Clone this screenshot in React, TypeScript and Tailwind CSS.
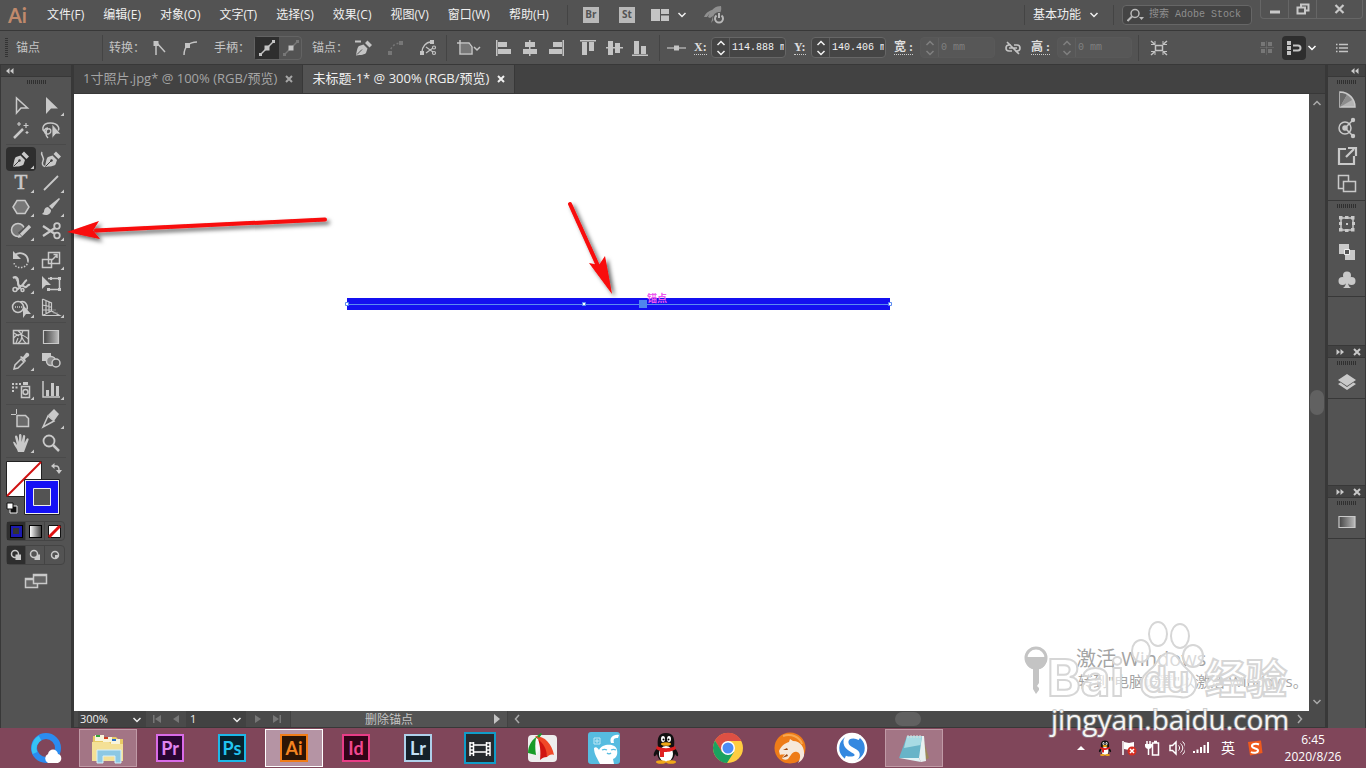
import type { ReactNode } from "react";
import clsx from "clsx";

const menus = ["文件(F)", "编辑(E)", "对象(O)", "文字(T)", "选择(S)", "效果(C)", "视图(V)", "窗口(W)", "帮助(H)"];

function Icon({ w = 24, h = 24, children }: { w?: number; h?: number; children: ReactNode }) {
  return (
    <svg width={w} height={h} viewBox={`0 0 ${w} ${h}`} fill="none" stroke="currentColor" strokeWidth="1.5" className="shrink-0" aria-hidden>
      {children}
    </svg>
  );
}

function Chevron({ up = false }: { up?: boolean }) {
  return (
    <Icon w={10} h={6}>
      <path d={up ? "M1.5 5 5 1.5 8.5 5" : "M1.5 1 5 4.5 8.5 1"} />
    </Icon>
  );
}

function Grip() {
  return (
    <div className="flex h-[5px] justify-center gap-px">
      {Array.from({ length: 10 }, (_, i) => (
        <span key={i} className="h-1 w-px bg-[#2f2f2f]" />
      ))}
    </div>
  );
}

function IconButton({ label, className, children }: { label: string; className?: string; children: ReactNode }) {
  return (
    <button type="button" aria-label={label} className={clsx("flex shrink-0 items-center justify-center", className)}>
      {children}
    </button>
  );
}

function Divider({ className }: { className?: string }) {
  return <span className={clsx("w-px shrink-0 bg-[#444]", className)} />;
}

/* ---------- menu bar ---------- */

function MenuBar() {
  return (
    <header className="flex h-[31px] shrink-0 items-center border-b border-[#383838] bg-[#535353] text-xs text-[#f0f0f0]">
      <span className="w-[39px] pl-2 font-['Lato',sans-serif] text-xl leading-6 font-bold text-[#c08a6c]">Ai</span>
      <nav className="flex gap-[3px]">
        {menus.map((m) => (
          <button key={m} type="button" className="px-2 whitespace-nowrap">
            {m}
          </button>
        ))}
      </nav>
      <Divider className="ml-2.5 h-5" />
      <div className="ml-[15px] flex items-center gap-5">
        <a href="#bridge" className="flex size-4 items-center justify-center bg-[#b9b9b9] text-[10px] font-bold text-[#535353]">Br</a>
        <a href="#stock" className="flex size-4 items-center justify-center bg-[#b9b9b9] text-[10px] font-bold text-[#535353]">St</a>
      </div>
      <IconButton label="排列文档" className="ml-4 gap-2">
        <Icon w={18} h={12}>
          <path d="M0 0h9v12H0zM10 0h8v5h-8zM10 6.500h8V12h-8z" fill="#c4c4c4" stroke="none" />
        </Icon>
        <Chevron />
      </IconButton>
      <IconButton label="GPU 性能" className="ml-4">
        <Icon w={22} h={20}>
          <path d="M1 12C3 7 8 5 9 5l-5 7zM5 12C8 4 13 1 18 1c1 5-1 8-4 10l-6 7 2-7-3 2z" fill="#8f8f8f" stroke="none" />
          <circle cx="16" cy="13" r="6" fill="#535353" stroke="none" />
          <path d="M13.500 10.500a4 4 0 1 0 5 0M16 8v5" stroke="#b8b8b8" strokeWidth="2" />
        </Icon>
      </IconButton>
      <div className="ml-auto flex h-full items-center">
        <Divider className="h-5" />
        <button type="button" className="ml-2 flex items-center gap-2 whitespace-nowrap">
          基本功能
          <Chevron />
        </button>
        <Divider className="ml-3.5 h-5" />
        <label className="ml-2 flex h-5 w-[130px] items-center gap-1 rounded-sm border border-[#666] bg-[#444] px-1 text-[#bbb]">
          <span className="sr-only">搜索 Adobe Stock</span>
          <Icon w={18} h={14}>
            <circle cx="8" cy="5.500" r="4" />
            <path d="M5 8.500.500 13" strokeWidth="2" />
            <path d="M12 9h5l-2.500 3z" fill="currentColor" stroke="none" />
          </Icon>
          <input
            placeholder="搜索 Adobe Stock"
            className="w-full min-w-0 bg-transparent font-['Liberation_Mono','Noto_Sans_CJK_SC',monospace] text-[10px] outline-none placeholder:text-[#8f8f8f]"
          />
        </label>
        <div className="mr-[3px] ml-2 flex h-[19px] self-start rounded-b-sm border border-t-0 border-[#666] text-[#c8c8c8]">
          <IconButton label="最小化" className="w-7 border-r border-[#666]">
            <Icon w={12} h={12}>
              <path d="M1 9h10" strokeWidth="3" />
            </Icon>
          </IconButton>
          <IconButton label="还原" className="w-7 border-r border-[#666]">
            <Icon w={14} h={12}>
              <path d="M5 4V1.500h7.500v6H9M1.500 4.500H9v6H1.500z" strokeWidth="2" />
            </Icon>
          </IconButton>
          <IconButton label="关闭" className="w-[45px]">
            <Icon w={12} h={12}>
              <path d="m1.500 2 8 8m0-8-8 8" strokeWidth="2.200" />
            </Icon>
          </IconButton>
        </div>
      </div>
    </header>
  );
}

/* ---------- control bar ---------- */

function Field({ id, label, value, wide, disabled }: { id: string; label: string; value: string; wide?: boolean; disabled?: boolean }) {
  return (
    <div className="flex shrink-0 items-center">
      <label
        htmlFor={id}
        className={clsx(
          "shrink-0 font-['Liberation_Serif','Noto_Sans_CJK_SC',serif] text-xs leading-[14px] font-bold text-[#dedede]",
          wide ? "w-[26px]" : "w-[17px]",
        )}
      >
        <span className="inline-block border-b border-dotted border-[#ccc] leading-[14px]">{label}</span>
      </label>
      <div
        className={clsx(
          "flex h-[21px] w-[75px] items-center rounded-sm border",
          disabled ? "border-[#595959] bg-[#575757] text-[#808080]" : "border-[#666] bg-[#454545] text-[#f2f2f2]",
        )}
      >
        <span className="flex h-full w-[18px] shrink-0 flex-col items-center justify-center gap-1 border-r border-[#5f5f5f]">
          <Chevron up />
          <Chevron />
        </span>
        <input
          id={id}
          defaultValue={value}
          disabled={disabled}
          className="w-full min-w-0 pr-px pl-0.5 font-['Liberation_Mono',monospace] text-[10px] outline-none"
        />
      </div>
    </div>
  );
}

const aligns = [
  [
    ["左对齐", "M0 0h1.500v16H0zM2 2h9v5H2zM2 9h13v5H2z"],
    ["水平居中", "M7 0h1.500v16H7zM3 2h10v5H3zM1 9h14v5H1z"],
    ["右对齐", "M14.500 0H16v16h-1.500zM5 2h9v5H5zM1 9h13v5H1z"],
  ],
  [
    ["顶对齐", "M0 0h16v1.500H0zM2 2h5v13H2zM9 2h5v9H9z"],
    ["垂直居中", "M0 7h17v1.500H0zM2 1h5v14H2zM9 3h5v10H9z"],
    ["底对齐", "M0 14.500h16V16H0zM2 1h5v13H2zM9 6h5v8H9z"],
  ],
];

function ControlBar() {
  return (
    <section aria-label="控制" className="flex h-[34px] shrink-0 items-center border-b border-[#383838] bg-[#535353] text-xs text-[#c4c4c4]">
      <div className="flex w-[102px] shrink-0 items-center pl-[5px]">
        <svg width="3" height="20" aria-hidden>
          <path d="M1.500 0v20" stroke="#333" strokeWidth="3" strokeDasharray="1 1" />
        </svg>
        <span className="ml-2">锚点</span>
      </div>
      <Divider className="h-[26px]" />
      <span className="ml-1.5 w-9 shrink-0">转换：</span>
      <IconButton label="转换为尖角" className="w-[30px]">
        <Icon w={16} h={16}>
          <path d="M4 2v13M4 2l9 10" />
          <path d="M1.500 1h5v5h-5z" fill="currentColor" stroke="none" />
        </Icon>
      </IconButton>
      <IconButton label="转换为平滑" className="w-[30px]">
        <Icon w={16} h={16}>
          <path d="M2 15C2 7 7 2 15 2" />
          <path d="M3 3h5v5H3z" fill="currentColor" stroke="none" />
        </Icon>
      </IconButton>
      <span className="ml-[9px] w-10 shrink-0">手柄：</span>
      <div className="flex h-6 w-12 shrink-0 rounded-sm border border-[#636363]">
        <IconButton label="显示手柄" className="w-6 bg-[#2e2e2e]">
          <Icon w={16} h={16}>
            <path d="m2 14 12-12" />
            <path d="M5.500 5.500h5v5h-5zM0 13h3v3H0zM13 0h3v3h-3z" fill="currentColor" stroke="none" />
          </Icon>
        </IconButton>
        <IconButton label="隐藏手柄" className="w-6">
          <Icon w={16} h={16}>
            <path d="m2 14 12-12" stroke="#777" />
            <path d="M0 13h3v3H0zM13 0h3v3h-3z" fill="#777" stroke="none" />
            <path d="M5.500 5.500h5v5h-5z" fill="currentColor" stroke="none" />
          </Icon>
        </IconButton>
      </div>
      <span className="ml-2.5 w-9 shrink-0">锚点：</span>
      <IconButton label="删除所选锚点" className="w-8">
        <Icon w={18} h={16}>
          <path d="M0 1.500h6" strokeWidth="2" />
          <path d="M1 15.500C2 10 2.500 7 4 6l4.500-1.500 4 4L11 13c-1 1.500-5 2-10 2.500zM10 3l2.500-2.500L17 5l-2.500 2.500z" fill="currentColor" stroke="none" />
          <path d="m2 14.500 5-5" stroke="#535353" strokeWidth="1" />
        </Icon>
      </IconButton>
      <IconButton label="连接锚点" className="w-8 text-[#777]">
        <Icon w={16} h={14}>
          <path d="M2 12C2 7 6 2 13 2" strokeDasharray="2 2" />
          <path d="M0 10h4v4H0zM11 0h4v4h-4z" fill="currentColor" stroke="none" />
        </Icon>
      </IconButton>
      <IconButton label="剪切路径" className="w-8">
        <Icon w={17} h={16}>
          <path d="M2 12C2 7 6 2 11 2" />
          <path d="M0 11h4v4H0zM10 0h4v4h-4z" fill="currentColor" stroke="none" />
          <path d="m6 7 7 5M6 13l7-5" strokeWidth="1.200" />
          <circle cx="14" cy="7.500" r="1.500" strokeWidth="1.200" />
          <circle cx="14" cy="13" r="1.500" strokeWidth="1.200" />
        </Icon>
      </IconButton>
      <Divider className="ml-0.5 h-[26px]" />
      <IconButton label="对齐画板" className="ml-2.5 w-6">
        <Icon w={24} h={16}>
          <path d="M3 0v14h12V7l-3-4H0" />
          <path d="M4 4h8l2 3v6H4z" fill="#777" stroke="none" />
          <path d="m17 7 3 3 3-3" />
        </Icon>
      </IconButton>
      {aligns.map((set, i) => (
        <div key={i} className={clsx("flex shrink-0", i === 0 ? "ml-2.5" : "ml-1.5")}>
          {set.map(([name, d]) => (
            <IconButton key={name} label={name} className="w-[26px]">
              <Icon w={17} h={16}>
                <path d={d} fill="currentColor" stroke="none" />
              </Icon>
            </IconButton>
          ))}
        </div>
      ))}
      <Divider className="ml-1.5 h-[26px]" />
      <IconButton label="参考点" className="mr-0.5 w-8">
        <Icon w={19} h={8}>
          <path d="M0 4h19" strokeWidth="1.200" />
          <path d="M7 1.500h5v5H7z" fill="currentColor" stroke="none" />
        </Icon>
      </IconButton>
      <div className="flex shrink-0 gap-2">
        <Field id="x" label="X:" value="114.888 mm" />
        <Field id="y" label="Y:" value="140.406 mm" />
        <Field id="w" label="宽 :" value="0 mm" wide disabled />
      </div>
      <IconButton label="约束宽高比" className="w-9">
        <Icon w={16} h={14}>
          <path d="M6 4H4a3 3 0 0 0 0 6h3M10 10h2a3 3 0 0 0 0-6H9M4 7h8M2 1l12 12" strokeWidth="1.600" />
        </Icon>
      </IconButton>
      <Field id="h" label="高 :" value="0 mm" wide disabled />
      <Divider className="ml-1.5 h-[26px]" />
      <IconButton label="隔离选中的对象" className="w-10">
        <Icon w={18} h={16}>
          <path d="M5.500 5.500h7v5h-7zM1 1l4 3.500M17 1l-4 3.500M1 15l4-3.500M17 15l-4-3.500" />
          <path d="M5 1v3.500H1M13 1v3.500h4M5 15v-3.500H1M13 15v-3.500h4" strokeWidth="1" />
        </Icon>
      </IconButton>
      <div className="ml-auto flex items-center">
        <IconButton label="对齐像素" className="w-[30px] text-[#777]">
          <Icon w={14} h={14}>
            <path d="M1 1h4v4H1zM8 1h4v4H8zM1 8h4v4H1zM8 8h4v4H8z" fill="currentColor" stroke="none" />
            <path d="M6.500 0v14M0 6.500h14" strokeWidth=".5" />
          </Icon>
        </IconButton>
        <IconButton label="对齐到网格" className="size-6 rounded-sm bg-[#2e2e2e]">
          <Icon w={15} h={14}>
            <path d="M0 0h4v4H0zM0 5h4v4H0zM0 10h4v4H0z" fill="currentColor" stroke="none" />
            <path d="M6 4.500h5a2.500 2.500 0 0 1 0 5H6" strokeWidth="2" />
          </Icon>
        </IconButton>
        <IconButton label="对齐选项" className="w-3 text-white">
          <Chevron />
        </IconButton>
        <IconButton label="控制菜单" className="w-12">
          <Icon w={12} h={10}>
            <path d="M3 1.500h9M3 5h9M3 8.500h9M0 1.500h1.500M0 5h1.500M0 8.500h1.500" />
          </Icon>
        </IconButton>
      </div>
    </section>
  );
}

/* ---------- tool panel, every icon sits in a 30x24 cell ---------- */

type Tool = { name: string; more?: boolean; active?: boolean; art: ReactNode };

const solid = { fill: "currentColor", stroke: "none" };
const nib = (
  <>
    <path d="M7 20c1-5 1.500-9 3-10l4.500-1.500L19 13l-1.500 4.500C16.500 19 12 19.500 7 20zM15.500 7l2.500-2.500 5 5-2.500 2.500z" {...solid} />
    <path d="m7.500 19.500 5.500-5.500" stroke="#3c3c3c" strokeWidth="1" />
    <circle cx="13.500" cy="13.500" r="1.200" fill="#3c3c3c" stroke="none" />
  </>
);

const toolGroups: Tool[][] = [
  [
    { name: "选择工具", art: <path d="M10.500 4v15l4.500-5h6.500z" /> },
    { name: "直接选择工具", more: true, art: <path d="M10 3v17l5-5.500h7z" {...solid} /> },
    {
      name: "魔棒工具",
      art: (
        <>
          <path d="m8 20 9-9" strokeWidth="2.500" />
          <path d="M13 4v4M11 6h4M20 5v5M17.500 7.500h5M21 13v3M19.500 14.500h3" strokeWidth="1.200" />
        </>
      ),
    },
    {
      name: "套索工具",
      art: (
        <>
          <path d="M11 14.500C5 14 5 5 14.500 5c8 0 10 6 6.500 8.500M10 14c0-4 5-4 5-1s-4 4-6 2 0-5 3-5M10 16c0 2 1 3 2 4" />
          <path d="M16 6v14.500l4-4.500h5z" fill="currentColor" stroke="#535353" strokeWidth=".8" />
        </>
      ),
    },
  ],
  [
    { name: "钢笔工具", more: true, active: true, art: nib },
    {
      name: "曲率工具",
      art: (
        <>
          <g transform="translate(2 0)">{nib}</g>
          <path d="M6 5c-2 3 3 5 1 9-1 2-1 5 2 5.500" />
        </>
      ),
    },
    {
      name: "文字工具",
      more: true,
      art: (
        <text x="15" y="18" textAnchor="middle" fontSize="21" fontFamily="Liberation Serif" stroke="currentColor" strokeWidth=".6" fill="currentColor">
          T
        </text>
      ),
    },
    { name: "直线段工具", more: true, art: <path d="M8 19 22 5" strokeWidth="1.800" /> },
    { name: "多边形工具", more: true, art: <path d="m11 5.500h8l4 6.500-4 6.500h-8L7 12z" fill="#777" /> },
    {
      name: "画笔工具",
      more: true,
      art: (
        <>
          <path d="m23 3-10 8 3 3 8-10z" {...solid} />
          <path d="M12 12c-3 0-4 3-4 5l-2 2c4 2 9 1 9-4z" {...solid} />
        </>
      ),
    },
    {
      name: "Shaper 工具",
      more: true,
      art: (
        <>
          <circle cx="12" cy="11" r="6.500" fill="#777" />
          <path d="m14 16 10-9" stroke="#535353" strokeWidth="6" />
          <path d="m15 16 9-9" strokeWidth="3.200" />
          <path d="m12 19 1-4 3 3z" {...solid} />
        </>
      ),
    },
    {
      name: "剪刀工具",
      more: true,
      art: (
        <>
          <path d="m7 7 12 8M7 17l12-8" strokeWidth="2.200" />
          <circle cx="21" cy="7" r="2.800" strokeWidth="1.800" />
          <circle cx="21" cy="16.500" r="2.800" strokeWidth="1.800" />
        </>
      ),
    },
  ],
  [
    {
      name: "旋转工具",
      more: true,
      art: (
        <>
          <path d="M9 7c5-4 13-1 13 6" strokeWidth="1.800" />
          <path d="M22 13c0 8-14 9-14 1" strokeDasharray="1.500 1.500" />
          <path d="M7 3v8h8z" {...solid} />
        </>
      ),
    },
    {
      name: "比例缩放工具",
      more: true,
      art: (
        <>
          <path d="M12.500 4.500h11v11h-11zM6.500 11.500h9v8h-9z" />
          <path d="m16 12 5-5M17.500 6.500H21V10" />
        </>
      ),
    },
    {
      name: "宽度工具",
      more: true,
      art: (
        <>
          <path d="M7 6c3-2 5 0 5 3s0 6 3 5 3-5 6-6M7 18c5 1 6-2 8-4s3 2 5 1 2-3 4-2" strokeWidth="2.200" />
          <path d="m9 5 7 14" strokeWidth="1" />
          <circle cx="9" cy="17.500" r="2" fill="#535353" />
          <circle cx="16.500" cy="18" r="1.500" fill="#535353" />
        </>
      ),
    },
    {
      name: "自由变换工具",
      art: (
        <>
          <path d="M12 6.500h11.500v11H12" />
          <path d="M6 4v13l4-4h5zM22 5h3v3h-3zM22 16h3v3h-3zM11 16h3v3h-3zM14 5h2v3h-2z" {...solid} />
        </>
      ),
    },
    {
      name: "形状生成器工具",
      more: true,
      art: (
        <>
          <circle cx="12" cy="11" r="5.500" />
          <path d="M14 6c6-2 10 6 5 9" />
          <path d="M9 11h10" strokeDasharray="1 1" />
          <path d="M17 9v13l3-4h5z" {...solid} />
        </>
      ),
    },
    {
      name: "透视网格工具",
      more: true,
      art: (
        <>
          <path d="M6.500 3v16.500M6.500 3l9 4v8M10 5v14M13 6v10M6.500 9l9 2M6.500 14h9M6.500 19.500h17l-8-4.500-9 4.500" strokeWidth="1.200" />
          <path d="M16 14h4M17 17h5" stroke="#888" strokeWidth="1" />
        </>
      ),
    },
  ],
  [
    {
      name: "网格工具",
      art: (
        <>
          <path d="M7.500 5.500h15v13h-15z" />
          <path d="M7.500 13c5-6 10-3 15 1M12 5.500c5 4 5 9 0 13M17 5.500c-3 5-1 9 3 13M8 8l5 3M10 18l2-5" strokeWidth="1.200" />
        </>
      ),
    },
    { name: "渐变工具", art: <path d="M7.500 5.500h15v13h-15z" fill="url(#fade)" strokeWidth="1.200" /> },
    {
      name: "吸管工具",
      more: true,
      art: (
        <>
          <path d="m8 20 1-4 6-6 3 3-6 6z" />
          <path d="m14 8 1-1 2 1 3-4c2-1 4 1 3 3l-4 3 1 2-1 1z" {...solid} />
        </>
      ),
    },
    {
      name: "混合工具",
      art: (
        <>
          <path d="M6 4h9v8H6z" {...solid} />
          <circle cx="15" cy="12" r="4.500" fill="#888" />
          <circle cx="20" cy="14" r="4" fill="#535353" />
        </>
      ),
    },
  ],
  [
    {
      name: "符号喷枪工具",
      more: true,
      art: (
        <>
          <path d="M6 5h2v2H6zM9.500 5h2v2h-2zM13 5h2v2h-2zM6 8.500h2v2H6zM9.500 8.500h2v2h-2zM6 12h2v2H6zM17 4h5v3h-5z" {...solid} />
          <path d="M15.500 8.500h8v11h-8z" />
          <circle cx="19.500" cy="14" r="2.500" />
        </>
      ),
    },
    {
      name: "柱形图工具",
      more: true,
      art: (
        <>
          <path d="M7 3v16h17" />
          <path d="M10 12h3v6h-3zM15 5h3v13h-3zM20 8h3v10h-3z" {...solid} />
        </>
      ),
    },
  ],
  [
    {
      name: "画板工具",
      art: (
        <>
          <path d="M10.500 2v5M5 7.500h5" strokeWidth="1" />
          <path d="M11 8.500h8.500l3 3v8H11z" fill="#6a6a6a" />
        </>
      ),
    },
    {
      name: "切片工具",
      more: true,
      art: (
        <>
          <path d="m7 20 5-11 6 5z" />
          <path d="m12 8 6-6 5 5-5 7z" {...solid} />
        </>
      ),
    },
    {
      name: "抓手工具",
      more: true,
      art: (
        <path
          d="M7 11c1-1 2 0 4 3L9 6c0-2 2-2 2.500 0l1.500 5V4.500c0-2 2.500-2 2.500 0V11l1.500-6c.5-2 2.500-1 2.200.5L18.500 12l2-4c1-1.500 2.700-.5 2 1l-3 8-1.500 4h-6c-1-4-4-6-5-10z"
          {...solid}
        />
      ),
    },
    {
      name: "缩放工具",
      art: (
        <>
          <circle cx="13" cy="10" r="5.500" strokeWidth="1.800" />
          <path d="m17 14 6 6" strokeWidth="2.500" />
        </>
      ),
    },
  ],
];

function ToolPanel() {
  return (
    <aside aria-label="工具" className="flex w-[74px] shrink-0 flex-col border-x border-r-3 border-[#383838] bg-[#535353] text-[#c9c9c9]">
      <svg width="0" height="0" className="absolute" aria-hidden>
        <linearGradient id="fade">
          <stop stopColor="#444" />
          <stop offset="1" stopColor="#bbb" />
        </linearGradient>
      </svg>
      <div className="flex h-3 shrink-0 items-center border-b border-[#383838] bg-[#424242] pl-[5px]">
        <Icon w={8} h={6}>
          <path d="M3.500 0 0 3l3.500 3zM7.500 0 4 3l3.500 3z" {...solid} />
        </Icon>
      </div>
      <div className="h-[17px] pt-[3px]">
        <Grip />
      </div>
      <div className="pl-[5px]">
        {toolGroups.map((group, i) => (
          <div key={i} className={clsx("grid w-[60px] grid-cols-2", i > 0 && "mt-0.5 border-t border-[#4a4a4a] pt-0.5")}>
            {group.map((t) => (
              <button
                key={t.name}
                type="button"
                aria-label={t.name}
                aria-pressed={t.active ?? false}
                className={clsx("h-6 w-[30px] rounded", t.active && "bg-[#2e2e2e]")}
              >
                <Icon w={30}>
                  {t.art}
                  {t.more && <path d="M28 18.500V22h-3.500z" {...solid} />}
                </Icon>
              </button>
            ))}
          </div>
        ))}
        <div className="mt-0.5 w-[60px] border-t border-[#4a4a4a] pt-[3px]">
          <svg width="60" height="56" viewBox="0 0 60 56" fill="none" role="img" aria-label="填色和描边">
            <path d="M.5.5h35v35H.5z" fill="#fff" stroke="#222" />
            <path d="m1 35 34-34" stroke="#d01010" strokeWidth="2" />
            <path d="M18.500 18.500h35v35h-35z" fill="#eee" stroke="#222" />
            <path d="M20 20h32v32H20z" fill="#1410f5" />
            <path d="M27.500 27.500h17v17h-17z" fill="#535353" stroke="#eee" />
            <path d="M48 5h2c2 0 3 1 3 4" stroke="#c9c9c9" strokeWidth="1.500" />
            <path d="M48.500 2v6L45 5zM50 9h6l-3 4z" fill="#c9c9c9" />
            <path d="M4 45h7v7H4z" fill="#111" stroke="#eee" />
            <path d="M1 42h6v6H1z" fill="#fff" stroke="#111" />
          </svg>
        </div>
        <div className="mt-1 flex h-5 w-[59px] rounded-sm border border-[#444]">
          <IconButton label="颜色" className="w-[18px] bg-[#2e2e2e]">
            <span className="flex size-[13px] items-center justify-center border border-black bg-[#1c1ab0]">
              <span className="size-1.5 bg-[#333]" />
            </span>
          </IconButton>
          <IconButton label="渐变" className="w-5 border-x border-[#444]">
            <span className="size-[13px] border border-black bg-linear-to-r from-white to-[#444]" />
          </IconButton>
          <IconButton label="无" className="w-[19px]">
            <Icon w={13} h={13}>
              <path d="M.5.5h12v12H.5z" fill="#fff" stroke="#111" strokeWidth="1" />
              <path d="m1 12 11-11" stroke="#e01010" strokeWidth="3" />
            </Icon>
          </IconButton>
        </div>
        <div className="mt-1 flex h-5 w-[59px] rounded-sm border border-[#444]">
          <IconButton label="正常绘图" className="w-[18px] bg-[#2e2e2e]">
            <Icon w={12} h={12}>
              <circle cx="5" cy="5" r="3.500" />
              <path d="M5.500 5.500h5.500V11H5.500z" {...solid} />
            </Icon>
          </IconButton>
          <IconButton label="背面绘图" className="w-5 border-x border-[#444]">
            <Icon w={12} h={12}>
              <path d="M5.500 5.500h5.500V11H5.500z" {...solid} />
              <circle cx="5" cy="5" r="3.500" fill="#535353" />
            </Icon>
          </IconButton>
          <IconButton label="内部绘图" className="w-[19px]">
            <Icon w={12} h={12}>
              <circle cx="6" cy="6" r="3.500" />
              <path d="M6 6h3v3H6z" {...solid} />
            </Icon>
          </IconButton>
        </div>
        <IconButton label="更改屏幕模式" className="mt-1.5 h-5 w-[60px]">
          <Icon w={24} h={18}>
            <path d="M1.500 6.500h12v9h-12z" fill="#666" />
            <path d="M9.500 2.500h13v9h-13z" fill="#666" />
            <path d="M2 7.500h7M10 3.500h12" />
          </Icon>
        </IconButton>
      </div>
    </aside>
  );
}

/* ---------- document area ---------- */

const tabs = [
  { title: "1寸照片.jpg* @ 100% (RGB/预览)", active: false },
  { title: "未标题-1* @ 300% (RGB/预览)", active: true },
];

function Tabs() {
  return (
    <div role="tablist" className="flex h-[29px] shrink-0 border-b border-[#383838] bg-[#424242] text-[13px]">
      {tabs.map((t) => (
        <div
          key={t.title}
          className={clsx(
            "flex items-center gap-2 border-r border-[#383838] px-[9px]",
            t.active ? "bg-[#535353] text-[#f0f0f0]" : "text-[#a5a5a5]",
          )}
        >
          <button type="button" role="tab" aria-selected={t.active} className="whitespace-nowrap">
            {t.title}
          </button>
          <IconButton label="关闭标签">
            <Icon w={8} h={8}>
              <path d="m1 1 6 6m0-6-6 6" strokeWidth="2" />
            </Icon>
          </IconButton>
        </div>
      ))}
    </div>
  );
}

function Artwork() {
  return (
    <svg width="840" height="240" className="absolute top-0 left-0 overflow-visible" role="img" aria-label="蓝色线段">
      <defs>
        <filter id="drop" x="-20%" y="-50%" width="140%" height="250%">
          <feDropShadow dx="3" dy="3" stdDeviation="2" floodOpacity="0.6" />
        </filter>
      </defs>
      <path d="M273 204h543v12H273z" fill="#1410f0" />
      <path d="M273 210.500h543" stroke="#5b8cf0" />
      <path d="M271.500 208.500h3v3h-3zM508.500 208.500h3v3h-3zM814.500 208.500h3v3h-3z" fill="#fff" stroke="#5b8cf0" />
      <path d="M565 206h8v8h-8z" fill="#4f86ee" />
      <text x="573" y="208" fontSize="10" fontWeight="bold" fill="#ee55ee">
        锚点
      </text>
      <g fill="#f80808" stroke="#f80808" filter="url(#drop)">
        <path d="m251 125.500-229 11" strokeWidth="4" strokeLinecap="round" />
        <path d="m-7 138 32-11-6 9.500 7 8.500z" stroke="none" />
        <path d="m496 110 28 62" strokeWidth="4" strokeLinecap="round" />
        <path d="m538 200-23-31 10 2 6-9z" stroke="none" />
      </g>
    </svg>
  );
}

function StatusBar() {
  return (
    <div className="flex h-[17px] shrink-0 items-center border-b border-[#383838] bg-[#4a4a4a] text-[11px] text-[#eee]">
      <div className="relative ml-1 h-full w-[68px] bg-[#424242]">
        <select aria-label="缩放" className="h-full w-full appearance-none pl-0.5 outline-none">
          <option>300%</option>
        </select>
        <span className="pointer-events-none absolute top-1.5 right-1">
          <Chevron />
        </span>
      </div>
      <span className="flex w-10 justify-center gap-2.5 text-[#777]">
        <Icon w={10} h={10}>
          <path d="M1 1h1.500v8H1zM9 1v8L3 5z" {...solid} />
        </Icon>
        <Icon w={8} h={10}>
          <path d="M7 1v8L1 5z" {...solid} />
        </Icon>
      </span>
      <div className="relative h-full w-[60px] bg-[#424242]">
        <select aria-label="画板" className="h-full w-full appearance-none pl-1 outline-none">
          <option>1</option>
        </select>
        <span className="pointer-events-none absolute top-1.5 right-1">
          <Chevron />
        </span>
      </div>
      <span className="flex w-11 justify-center gap-2.5 text-[#777]">
        <Icon w={8} h={10}>
          <path d="M1 1v8l6-4z" {...solid} />
        </Icon>
        <Icon w={10} h={10}>
          <path d="M7.500 1H9v8H7.500zM1 1v8l6-4z" {...solid} />
        </Icon>
      </span>
      <div className="flex h-full w-[218px] items-center border-x border-[#424242] bg-[#535353] text-xs text-[#c4c4c4]">
        <span className="flex-1 pt-0.5 text-center">删除锚点</span>
        <IconButton label="状态菜单" className="w-5">
          <Icon w={8} h={10}>
            <path d="M1 0v10l6-5z" {...solid} />
          </Icon>
        </IconButton>
      </div>
      <div className="flex h-full flex-1 items-center px-1.5 text-[#aaa]">
        <Icon w={6} h={10}>
          <path d="M5 1 1.500 5 5 9" />
        </Icon>
        <span className="ml-auto h-3.5 w-[26px] rounded-full bg-[#616161]" />
        <span className="ml-[376px]">
          <Icon w={6} h={10}>
            <path d="M1 1l3.500 4L1 9" />
          </Icon>
        </span>
      </div>
      <span className="w-4" />
    </div>
  );
}

function Workspace() {
  return (
    <main className="flex min-w-0 flex-1 flex-col">
      <Tabs />
      <div className="flex min-h-0 flex-1">
        <div className="relative z-10 flex-1 bg-white">
          <Artwork />
        </div>
        <div className="flex w-4 shrink-0 flex-col items-center justify-between bg-[#4a4a4a] py-1.5 text-[#aaa]">
          <Chevron up />
          <span className="h-[25px] w-3.5 rounded-full bg-[#616161]" />
          <Chevron />
        </div>
      </div>
      <StatusBar />
    </main>
  );
}

/* ---------- right dock ---------- */

const dockTop: Tool[][] = [
  [
    {
      name: "颜色",
      art: (
        <>
          <path d="M5 19V4c9 0 15 7 15 15z" fill="#b4b4b4" />
          <path d="M5 19V5c3 0 5 .5 7 2z" fill="#6a6a6a" stroke="none" />
          <path d="M5 19 12 7c2 1 4 3 5 5z" fill="#8c8c8c" stroke="none" />
        </>
      ),
    },
    {
      name: "颜色主题",
      art: (
        <>
          <circle cx="10" cy="12" r="6" />
          <circle cx="10" cy="12" r="2" fill="currentColor" />
          <path d="m11 11 7-7M11 13l7 7" />
          <circle cx="18" cy="4" r="2.200" {...solid} />
          <circle cx="18" cy="20" r="2.200" {...solid} />
        </>
      ),
    },
    { name: "资源导出", art: <path d="M11 5H4v15h15v-8M11 13l8-8M13 4h8v8" strokeWidth="2.200" /> },
    {
      name: "画板",
      art: (
        <>
          <path d="M3.500 3.500h10v13h-10z" />
          <path d="M8.500 9.500h12v10h-12z" fill="#535353" />
        </>
      ),
    },
  ],
  [
    {
      name: "变换",
      art: (
        <>
          <path d="M6 6h12v12H6z" />
          <path d="M4 4h3.500v3.500H4zM10 4h3.500v3H10zM16 4h3.500v3.500H16zM4 10h3v3H4zM17 10h3v3h-3zM4 16h3.500v3.500H4zM10 17h3.500v3H10zM16 16h3.500v3.500H16zM11 11h2v2h-2z" {...solid} />
        </>
      ),
    },
    {
      name: "路径查找器",
      art: (
        <>
          <path d="M4 4h10v10H4zM10 10h10v10H10z" {...solid} />
          <path d="M9.500 9.500h5v5h-5z" fill="#535353" stroke="#eee" strokeWidth="1" />
        </>
      ),
    },
    {
      name: "符号",
      art: (
        <>
          <circle cx="12" cy="7.500" r="4" {...solid} />
          <circle cx="7.500" cy="13" r="4" {...solid} />
          <circle cx="16.500" cy="13" r="4" {...solid} />
          <path d="M11 10h2c0 6 0 8 3 10H8c3-2 3-4 3-10z" {...solid} />
        </>
      ),
    },
  ],
];

const dockLower: Tool[] = [
  { name: "图层", art: <path d="m12 4 9 6-9 6-9-6zM3 14l2.500-1.500L12 17l6.500-4.500L21 14l-9 6z" {...solid} /> },
  { name: "渐变", art: <path d="M4 6.500h16v11H4z" fill="url(#fade)" strokeWidth="1.200" /> },
];

function Dock() {
  return (
    <aside aria-label="面板" className="flex w-[41px] shrink-0 flex-col border-r border-l-3 border-[#383838] bg-[#535353] text-[#c9c9c9]">
      <div className="flex h-3 shrink-0 items-center justify-end border-b border-[#383838] bg-[#424242] pr-1.5">
        <Icon w={8} h={6}>
          <path d="M3.500 0 0 3l3.500 3zM7.500 0 4 3l3.500 3z" {...solid} />
        </Icon>
      </div>
      {dockTop.map((group, i) => (
        <div key={i} className="border-b border-[#383838] pt-[3px] pb-0.5">
          <Grip />
          <div className="pt-px">
            {group.map((t) => (
              <IconButton key={t.name} label={t.name} className="h-7 w-full">
                <Icon>{t.art}</Icon>
              </IconButton>
            ))}
          </div>
        </div>
      ))}
      <div className="mt-12 flex flex-col gap-[86px]">
        {dockLower.map((t) => (
          <div key={t.name} className="border-y border-[#383838]">
            <div className="flex h-3 items-center justify-between border-b border-[#383838] bg-[#424242] pr-1 pl-2">
              <Icon w={8} h={6}>
                <path d="M.5 0 4 3 .5 6zM4.500 0 8 3 4.500 6z" {...solid} />
              </Icon>
              <Icon w={8} h={8}>
                <path d="m1 1 6 6m0-6-6 6" strokeWidth="2" />
              </Icon>
            </div>
            <div className="pt-[3px]">
              <Grip />
            </div>
            <IconButton label={t.name} className="h-8 w-full">
              <Icon>{t.art}</Icon>
            </IconButton>
          </div>
        ))}
      </div>
    </aside>
  );
}

/* ---------- taskbar ---------- */

function Penguin({ size }: { size: number }) {
  return (
    <svg width={size} height={size} viewBox="0 0 32 32" aria-hidden>
      <path d="M8 15C7 7 8 1 16 1s9 6 8 14c3 3 5 7 4 9-1 1-2-1-3-2-1 5-4 8-9 8s-8-3-9-8c-1 1-2 3-3 2-1-2 1-6 4-9z" fill="#111" />
      <ellipse cx="16" cy="22" rx="7" ry="8" fill="#fff" />
      <ellipse cx="11" cy="30" rx="5" ry="1.800" fill="#f0a818" />
      <ellipse cx="21" cy="30" rx="5" ry="1.800" fill="#f0a818" />
      <ellipse cx="13" cy="7" rx="2" ry="3" fill="#fff" />
      <ellipse cx="19" cy="7" rx="2" ry="3" fill="#fff" />
      <circle cx="13.500" cy="7.500" r="1" />
      <circle cx="18.500" cy="7.500" r="1" />
      <ellipse cx="16" cy="12" rx="5" ry="1.800" fill="#f0a818" />
      <path d="M7 14c6 3 12 3 18 0l1 3c-5 3-9 3-12 3v5h-4v-6l-4-2z" fill="#e02020" />
    </svg>
  );
}

function Adobe({ text, className }: { text: string; className: string }) {
  return (
    <span className={clsx("flex size-7 items-center justify-center border-2 font-['Lato',sans-serif] text-lg leading-6 font-bold", className)}>
      {text}
    </span>
  );
}

const apps: { name: string; state?: "open" | "front"; icon: ReactNode }[] = [
  {
    name: "QQ浏览器",
    icon: (
      <svg width="32" height="32" viewBox="0 0 32 32" aria-hidden>
        <circle cx="16" cy="16" r="12" fill="none" stroke="#2b8cf0" strokeWidth="6" />
        <path d="M5 21A12 12 0 0 1 10 6" fill="none" stroke="#35c3f5" strokeWidth="5" />
        <path d="M18 31a5 5 0 0 1 0-9c1-6 9-6 10 0 5 1 4 9-1 9z" fill="#fff" />
      </svg>
    ),
  },
  {
    name: "文件资源管理器",
    state: "open",
    icon: (
      <svg width="34" height="32" viewBox="0 0 34 32" aria-hidden>
        <path d="M2 4h8l2 3h4l2-2h7l2 2h5v22H1z" fill="#e8c964" />
        <path d="M4 3h9v6H4z" fill="#f8f4da" />
        <path d="M5 3h4v2H5z" fill="#34a53a" />
        <path d="M12 5h9v5h-9z" fill="#f8f4da" />
        <path d="M13 5h4v2h-4z" fill="#d04020" />
        <path d="M20 7h9v5h-9z" fill="#f8f4da" />
        <path d="M21 7h4v2h-4z" fill="#2a70c8" />
        <path d="M1 10h17l2 2h12v17H1z" fill="#f4e096" />
        <path d="M6 18h24v13h-6v-7H12v7H6z" fill="#8cc8e4" stroke="#d8f0fa" />
      </svg>
    ),
  },
  { name: "Premiere Pro", icon: <Adobe text="Pr" className="border-[#d96be8] bg-[#2a0634] text-[#e085f0]" /> },
  { name: "Photoshop", icon: <Adobe text="Ps" className="border-[#1cb8e8] bg-[#06222e] text-[#22c4f0]" /> },
  { name: "Illustrator", state: "front", icon: <Adobe text="Ai" className="border-[#f07c18] bg-[#2c1404] text-[#f48420]" /> },
  { name: "InDesign", icon: <Adobe text="Id" className="border-[#e83c86] bg-[#320418] text-[#f04890]" /> },
  { name: "Lightroom", icon: <Adobe text="Lr" className="border-[#aed0ea] bg-[#14202a] text-[#c4e0f4]" /> },
  {
    name: "影音",
    icon: (
      <svg width="32" height="32" viewBox="0 0 32 32" fill="none" aria-hidden>
        <path d="M1 1h30v30H1z" fill="#262a2e" stroke="#109cc8" strokeWidth="2" />
        <path d="M6 10v14M9.500 10v14M22.500 10v14M26 10v14" stroke="#fff" strokeWidth="1.500" />
        <path d="M6 11h4M6 14.500h4M6 18h4M6 21.500h4M22 11h4M22 14.500h4M22 18h4M22 21.500h4M10 13h12M10 20h12" stroke="#fff" strokeWidth="1.500" />
      </svg>
    ),
  },
  {
    name: "FastStone",
    icon: (
      <svg width="32" height="32" viewBox="0 0 32 32" aria-hidden>
        <rect x="2" y="3" width="29" height="27" rx="4" fill="#eee" />
        <path d="M12 4C6 7 2 14 2 21l8 2c0-8 1-13 4-18z" fill="#189c28" />
        <path d="M10 6l5 2-1 9-4 6c-1-6-1-12 0-17z" fill="#f8f8f8" />
        <path d="M9 4c10 0 17 8 19 19-3-1-5 0-7 2C19 16 14 8 9 4z" fill="#f04828" />
        <path d="M12 7c2 6 3 12 2 21 2-2 4-3 7-3 0-8-4-14-9-18z" fill="#d01410" />
        <path d="M11 4l4-3 1 1-3 4z" fill="#189c28" />
      </svg>
    ),
  },
  {
    name: "小白",
    icon: (
      <svg width="32" height="32" viewBox="0 0 32 32" aria-hidden>
        <rect width="32" height="32" rx="3" fill="#56bce0" />
        <path d="M12 32c-2-5-6-9-6-16 2-2 4 0 5 2 3-7 17-7 18 0 1 5-1 8-4 9l1 5z" fill="#fff" />
        <path d="M23 11c-2-5 2-9 8-8l-1 3c-4 0-5 1-4 5z" fill="#fff" />
        <path d="M14 18c2-1 3-1 5 0M23 18c2-1 3-1 5 0M19 21c1 1 3 1 4 0" stroke="#56bce0" strokeWidth="1.300" fill="none" />
        <path d="M6 6h6v6H6zM8 8h2v2H8z" fill="none" stroke="#c0e8f6" />
      </svg>
    ),
  },
  { name: "QQ", icon: <Penguin size={32} /> },
  {
    name: "Chrome",
    icon: (
      <svg width="32" height="32" viewBox="0 0 32 32" aria-hidden>
        <circle cx="16" cy="16" r="15" fill="#ffcd40" />
        <path d="M3 8.500A15 15 0 0 1 29.500 9H16l-6.500 11z" fill="#dd5044" />
        <path d="M3 8.500A15 15 0 0 0 15 31l7-11H10z" fill="#1aa260" />
        <circle cx="16" cy="16" r="7" fill="#fff" />
        <circle cx="16" cy="16" r="5.500" fill="#4c8bf5" />
      </svg>
    ),
  },
  {
    name: "猎豹浏览器",
    icon: (
      <svg width="32" height="32" viewBox="0 0 32 32" aria-hidden>
        <circle cx="16" cy="16" r="15.500" fill="#ee7c18" />
        <path d="M5 19c2-5 6-8 10-9l1-3 3 2c8 0 12 7 11 15-1 3-3 5-6 7 3-5 3-10-1-11-5-1-6 4-9 7-2 1-5 1-6-1l3-4c-2 1-4 0-5 1z" fill="#f6e8da" />
        <path d="M9 18l4-2 1 2zM8 26l5-4 1 2z" fill="#9c4408" />
        <path d="M9 4c8-3 17 1 19 8" stroke="#f8a850" strokeWidth="2" fill="none" />
      </svg>
    ),
  },
  {
    name: "搜狗浏览器",
    icon: (
      <svg width="32" height="32" viewBox="0 0 32 32" aria-hidden>
        <circle cx="16" cy="16" r="14" fill="#3488e0" stroke="#fff" strokeWidth="2.500" />
        <path d="M24 6c-6-4-15-2-14 5 1 8 13 7 11 13-1 3-7 4-12 2" stroke="#fff" strokeWidth="5" fill="none" />
      </svg>
    ),
  },
  {
    name: "记事本",
    state: "open",
    icon: (
      <svg width="34" height="32" viewBox="0 0 34 32" aria-hidden>
        <path d="M25 4l7 22-6 3z" fill="#9c8858" />
        <path d="M11 4h16l2 25-5 1z" fill="#e8f0f0" />
        <path d="M10 4h15l-3 22H2z" fill="#68b4c8" />
        <path d="M10 4h15l-1.500 9L7 16z" fill="#a8dbe4" />
        <path d="M2 26h20l2 4z" fill="#dff2f4" />
        <path d="M11 3v3M14 3v3M17 3v3M20 3v3M23 3v3" stroke="#ddd" />
      </svg>
    ),
  },
];

function Taskbar() {
  return (
    <footer className="flex h-10 shrink-0 items-center bg-[#80465a] pl-[15px] text-white">
      {apps.map((a) => (
        <button
          key={a.name}
          type="button"
          aria-label={a.name}
          className={clsx(
            "mx-0.5 flex h-[38px] w-[58px] shrink-0 items-center justify-center border",
            !a.state && "border-transparent",
            a.state === "open" && "border-[#c09aa6] bg-[#a37585]",
            a.state === "front" && "border-white bg-[#b594a4]",
          )}
        >
          {a.icon}
        </button>
      ))}
      <div className="mr-[7px] ml-auto flex items-center">
        <IconButton label="显示隐藏的图标" className="w-6">
          <Icon w={8} h={4}>
            <path d="M0 4l4-4 4 4z" {...solid} />
          </Icon>
        </IconButton>
        <IconButton label="QQ" className="w-6">
          <Penguin size={16} />
        </IconButton>
        <IconButton label="操作中心" className="w-6">
          <Icon w={16} h={16}>
            <path d="M2 1v14" />
            <path d="M3 2l5 1 5-1v7l-5 1-5-1z" {...solid} />
            <circle cx="11" cy="11" r="4.500" fill="#d82c20" stroke="none" />
            <path d="m9 9 4 4m0-4-4 4" />
          </Icon>
        </IconButton>
        <IconButton label="电源" className="w-6">
          <Icon w={16} h={16}>
            <path d="M7.500 3h6v12h-6zM9 1.500h3M3.500 7v8M2 1v3M5 1v3" />
            <path d="M0 4h7v2c0 2-2 3-3.500 3S0 8 0 6z" {...solid} />
          </Icon>
        </IconButton>
        <IconButton label="音量" className="w-6">
          <Icon w={16} h={16}>
            <path d="M1 5.500h2.500L7 2v12l-3.500-3.500H1z" />
            <path d="M9.500 5.500c1.500 1.500 1.500 3.500 0 5M11.500 3.500c3 3 3 6 0 9M13.500 1.500c4 4 4 9 0 13" strokeWidth="1" />
          </Icon>
        </IconButton>
        <IconButton label="网络" className="w-6">
          <Icon w={16} h={12}>
            <path d="M0 9h2v2H0zM3.500 7.500h2V11h-2zM7 5h2v6H7zM10.500 3h2v8h-2zM14 0h2v11h-2z" {...solid} />
          </Icon>
        </IconButton>
        <button type="button" className="w-[30px] text-sm leading-5">英</button>
        <IconButton label="搜狗输入法" className="w-6">
          <Icon w={16} h={16}>
            <path d="M1 2l13-1.500L15.500 13 3 15.500z" fill="#f05a1c" stroke="none" />
            <path d="M12 4.500C9 3 4.500 4 5 6.500s6 1.500 6 4-4.500 3-7 1.500" stroke="#fff" strokeWidth="2" />
          </Icon>
        </IconButton>
        <time className="w-[92px] text-center text-xs leading-[17px]">
          6:45
          <br />
          2020/8/26
        </time>
      </div>
    </footer>
  );
}

function Watermark() {
  return (
    <svg width="350" height="158" viewBox="0 0 350 158" className="pointer-events-none absolute right-0 bottom-0 z-20" fill="none" aria-hidden>
      <g fill="#a4a4a4">
        <text x="60" y="56" fontSize="20">
          激活 Windows
        </text>
        <text x="62" y="77" fontSize="15">
          转到"电脑设置"以激活 Windows。
        </text>
        <path d="M17 67v12l3 5 3-4v-2l-2-2 2-3v-6z" fill="#c4c4c4" />
        <circle cx="20" cy="48" r="10" fill="#fff" stroke="#c4c4c4" strokeWidth="3" />
        <path d="M9 47h22c0 8-5 12-8 12v11h-6V59c-4-1-8-5-8-12z" fill="#c4c4c4" />
      </g>
      <g fill="#fff" fillOpacity=".6" stroke="#d6d6d6" strokeWidth="2">
        <ellipse cx="142" cy="24" rx="9" ry="12" />
        <ellipse cx="164" cy="26" rx="9" ry="12" />
        <ellipse cx="125" cy="41" rx="9" ry="11" />
        <ellipse cx="177" cy="46" rx="10" ry="11" />
        <path d="M153 43c8 0 10 8 15 13s12 10 12 18c0 10-8 15-16 13-8-1-14-1-22 0-10 2-17-4-17-13 0-8 7-12 12-17s7-14 16-14z" />
        <g fontFamily="Inter" fontWeight="bold">
          <text x="31" y="86" fontSize="51">
            Bai
          </text>
          <text x="128" y="82" fontSize="36">
            du
          </text>
        </g>
        <text x="189" y="84" fontSize="41" fontWeight="bold">
          经验
        </text>
      </g>
      <text x="35" y="120" fontSize="28" fill="#f4f4f4" stroke="#999" strokeOpacity=".5" strokeWidth="2" paintOrder="stroke">
        jingyan.baidu.com
      </text>
    </svg>
  );
}

export default function App() {
  return (
    <div className="relative flex h-screen flex-col overflow-hidden font-['Open_Sans','Noto_Sans_CJK_SC',sans-serif]">
      <MenuBar />
      <ControlBar />
      <div className="flex min-h-0 flex-1 bg-[#424242]">
        <ToolPanel />
        <Workspace />
        <Dock />
      </div>
      <Taskbar />
      <Watermark />
    </div>
  );
}
